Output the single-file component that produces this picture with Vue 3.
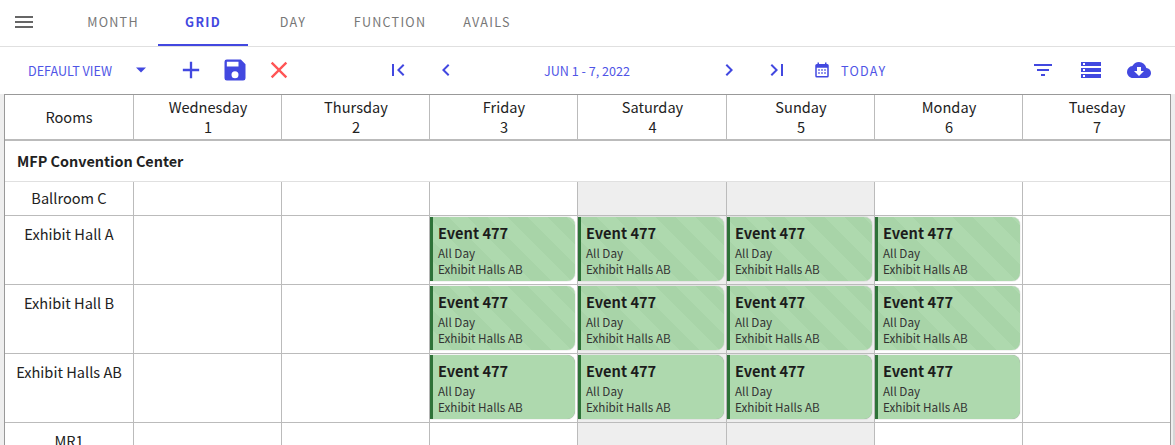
<template>
  <div class="app">
    <div class="tabs">
      <svg class="menu" width="24" height="24" viewBox="0 0 24 24"><path d="M3 18h18v-2H3v2zm0-5h18v-2H3v2zm0-7v2h18V6H3z" fill="#666" /></svg>
      <div v-for="tab in tabs" :key="tab.name" class="tab" :class="{ active: tab.active }" :style="{ width: tab.width + 'px' }">{{ tab.name }}</div>
    </div>

    <div class="toolbar">
      <span class="view">DEFAULT VIEW</span>
      <svg class="caret" width="12" height="6" viewBox="0 0 12 6"><path d="M1 0.5h10L6 5.5z" fill="#4248e0" /></svg>
      <svg class="ic plus" width="28" height="28" viewBox="0 0 24 24"><path d="M19 13h-6v6h-2v-6H5v-2h6V5h2v6h6v2z" /></svg>
      <svg class="ic save" width="28" height="28" viewBox="0 0 24 24"><path d="M17 3H5a2 2 0 0 0-2 2v14a2 2 0 0 0 2 2h14a2 2 0 0 0 2-2V7l-4-4zm-5 16a3 3 0 1 1 0-6 3 3 0 0 1 0 6zm3-10H5V5h10v4z" /></svg>
      <svg class="ic close" width="28" height="28" viewBox="0 0 24 24"><path d="M19 6.41 17.59 5 12 10.59 6.41 5 5 6.41 10.59 12 5 17.59 6.41 19 12 13.41 17.59 19 19 17.59 13.41 12z" fill="#f55" /></svg>
      <svg class="ic first" width="24" height="24" viewBox="0 0 24 24"><path d="M18.41 16.59 13.82 12l4.59-4.59L17 6l-6 6 6 6zM6 6h2v12H6z" /></svg>
      <svg class="ic prev" width="24" height="24" viewBox="0 0 24 24"><path d="M15.41 7.41 14 6l-6 6 6 6 1.41-1.41L10.83 12z" /></svg>
      <span class="range">JUN 1 - 7, 2022</span>
      <svg class="ic next" width="24" height="24" viewBox="0 0 24 24"><path d="M10 6 8.59 7.41 13.17 12l-4.58 4.59L10 18l6-6z" /></svg>
      <svg class="ic last" width="24" height="24" viewBox="0 0 24 24"><path d="M5.59 7.41 10.18 12l-4.59 4.59L7 18l6-6-6-6zM16 6h2v12h-2z" /></svg>
      <svg class="ic cal" width="18" height="18" viewBox="0 0 24 24"><path d="M9 11H7v2h2v-2zm4 0h-2v2h2v-2zm4 0h-2v2h2v-2zm2-7h-1V2h-2v2H8V2H6v2H5a2 2 0 0 0-2 2v14a2 2 0 0 0 2 2h14a2 2 0 0 0 2-2V6a2 2 0 0 0-2-2zm0 16H5V9h14v11zM9 15H7v2h2v-2zm4 0h-2v2h2v-2zm4 0h-2v2h2v-2z" /></svg>
      <span class="today">TODAY</span>
      <svg class="ic filter" width="24" height="24" viewBox="0 0 24 24"><path d="M10 18h4v-2h-4v2zM3 6v2h18V6H3zm3 7h12v-2H6v2z" /></svg>
      <svg class="ic storage" width="24" height="24" viewBox="0 0 24 24"><path d="M2 20h20v-4H2v4zm2-3h2v2H4v-2zM2 4v4h20V4H2zm4 3H4V5h2v2zm-4 7h20v-4H2v4zm2-3h2v2H4v-2z" /></svg>
      <svg class="ic cloud" width="24" height="24" viewBox="0 0 24 24"><path d="M19.35 10.04A7.49 7.49 0 0 0 12 4C9.11 4 6.6 5.64 5.35 8.04A5.994 5.994 0 0 0 0 14c0 3.31 2.69 6 6 6h13c2.76 0 5-2.24 5-5 0-2.64-2.05-4.78-4.65-4.96zM17 13l-5 5-5-5h3V9h4v4h3z" /></svg>
    </div>

    <div class="gutter">
      <div class="sheet">
        <div class="grid head">
          <div class="cell room">Rooms</div>
          <div v-for="d in days" :key="d.num" class="cell day"><span>{{ d.name }}</span><span>{{ d.num }}</span></div>
        </div>
        <div class="group">MFP Convention Center</div>
        <div v-for="row in rows" :key="row.name" class="grid row" :class="row.kind">
          <div class="cell name">{{ row.name }}</div>
          <div v-for="d in days" :key="d.num" class="cell slot" :class="{ off: d.off }">
            <div v-if="row.event && d.event" class="event" :class="{ striped: row.striped }">
              <b>Event 477</b>
              <span>All Day</span>
              <span>Exhibit Halls AB</span>
            </div>
          </div>
        </div>
      </div>
      <div class="thumb"></div>
    </div>
  </div>
</template>

<script setup>
const tabs = [
  { name: 'MONTH', width: 90 },
  { name: 'GRID', width: 90, active: true },
  { name: 'DAY', width: 90 },
  { name: 'FUNCTION', width: 104 },
  { name: 'AVAILS', width: 90 }
]

const days = [
  { name: 'Wednesday', num: 1 },
  { name: 'Thursday', num: 2 },
  { name: 'Friday', num: 3, event: true },
  { name: 'Saturday', num: 4, event: true, off: true },
  { name: 'Sunday', num: 5, event: true, off: true },
  { name: 'Monday', num: 6, event: true },
  { name: 'Tuesday', num: 7 }
]

const rows = [
  { name: 'Ballroom C', kind: 'short' },
  { name: 'Exhibit Hall A', kind: 'tall', event: true, striped: true },
  { name: 'Exhibit Hall B', kind: 'tall', event: true, striped: true },
  { name: 'Exhibit Halls AB', kind: 'tall', event: true },
  { name: 'MR1', kind: 'tall' }
]
</script>

<style>
html, body {
  overflow: hidden;
  background: #fff;
}
</style>

<style scoped>
.app {
  width: 1175px;
  height: 445px;
  overflow: hidden;
  font-family: "Noto Sans CJK SC", "Noto Sans", sans-serif;
  color: #222;
}
.tabs {
  display: flex;
  align-items: stretch;
  height: 46px;
  border-bottom: 1px solid #e0e0e0;
}
.menu {
  margin: 10px 0 0 12px;
  flex: none;
}
.tab {
  display: flex;
  align-items: center;
  justify-content: center;
  box-sizing: border-box;
  padding-bottom: 3px;
  font-size: 12.6px;
  letter-spacing: 1.25px;
  color: #777;
}
.tab:first-of-type {
  margin-left: 32px;
}
.tab.active {
  color: #4248e0;
  font-weight: 700;
  border-bottom: 2px solid #4248e0;
  padding-bottom: 1px;
}
.toolbar {
  display: flex;
  align-items: center;
  height: 47px;
  padding-bottom: 1px;
  box-sizing: border-box;
  color: #4248e0;
}
.ic {
  flex: none;
  fill: #4248e0;
}
.view {
  margin-left: 28px;
  font-size: 12.6px;
  width: 85px;
  white-space: nowrap;
  color: #4f55e6;
}
.caret {
  margin-left: 22px;
}
.plus { margin-left: 30px; }
.save { margin-left: 16px; }
.close { margin-left: 16px; }
.first { margin-left: 93px; }
.prev { margin-left: 24px; }
.range {
  margin-left: 86px;
  width: 86px;
  font-size: 12.6px;
  white-space: nowrap;
  color: #4f55e6;
}
.next { margin-left: 87px; }
.last { margin-left: 24px; }
.cal { margin-left: 24px; }
.today {
  margin-left: 10px;
  width: 45px;
  font-size: 12.6px;
  letter-spacing: 1.25px;
  color: #4f55e6;
}
.filter { margin-left: 145px; }
.storage { margin-left: 24px; }
.cloud { margin-left: 24px; }
.gutter {
  position: relative;
  padding: 0 4px;
  height: 351px;
  background: #eee;
}
.thumb {
  position: absolute;
  right: 0;
  top: 216px;
  bottom: 0;
  width: 2px;
  background: #d6d6d6;
}
.sheet {
  width: 1167px;
  height: 351px;
  overflow: hidden;
  background: #fff;
  border-top: 1px solid #999;
  border-left: 1px solid #999;
  border-right: 1px solid #999;
  box-sizing: border-box;
}
.grid {
  display: grid;
  grid-template-columns: 128px 148px 148px 148px 149px 148px 148px 148px;
}
.head {
  height: 46px;
  border-bottom: 2px solid #bbb;
  box-sizing: border-box;
  font-size: 14.6px;
  line-height: 20px;
}
.cell {
  box-sizing: border-box;
  border-left: 1px solid #bbb;
  text-align: center;
}
.cell:first-child {
  border-left: 0;
}
.room {
  display: flex;
  align-items: center;
  justify-content: center;
}
.day {
  display: flex;
  flex-direction: column;
  justify-content: center;
  padding-left: 1px;
}
.group {
  height: 41px;
  box-sizing: border-box;
  padding: 0 0 2px 12px;
  display: flex;
  align-items: center;
  font-size: 14.4px;
  font-weight: 700;
  border-bottom: 1px solid #e0e0e0;
}
.row {
  font-size: 14.6px;
  line-height: 19px;
  border-bottom: 1px solid #bbb;
  box-sizing: border-box;
}
.row.short {
  height: 34px;
}
.row.tall {
  height: 69px;
}
.name {
  padding-top: 6px;
}
.tall .name {
  padding-top: 8px;
}
.off {
  background: #eee;
}
.slot {
  padding: 1px 2px 1px 0;
}
.event {
  height: 64px;
  box-sizing: border-box;
  display: flex;
  flex-direction: column;
  padding: 5px 0 0 5px;
  background: #aed9ae;
  border-left: 3px solid #2e7238;
  border-radius: 0 8px 8px 0;
  box-shadow: 0 0 1px #888;
  text-align: left;
  font-size: 11.7px;
  line-height: 16px;
  color: #333;
}
.event.striped {
  background: repeating-linear-gradient(45deg, #aed9ae 0 14px, #a8d4a8 14px 28px);
}
.event b {
  font-size: 14.6px;
  line-height: 22px;
  margin-bottom: 1px;
  color: #1c1c1c;
}
</style>
